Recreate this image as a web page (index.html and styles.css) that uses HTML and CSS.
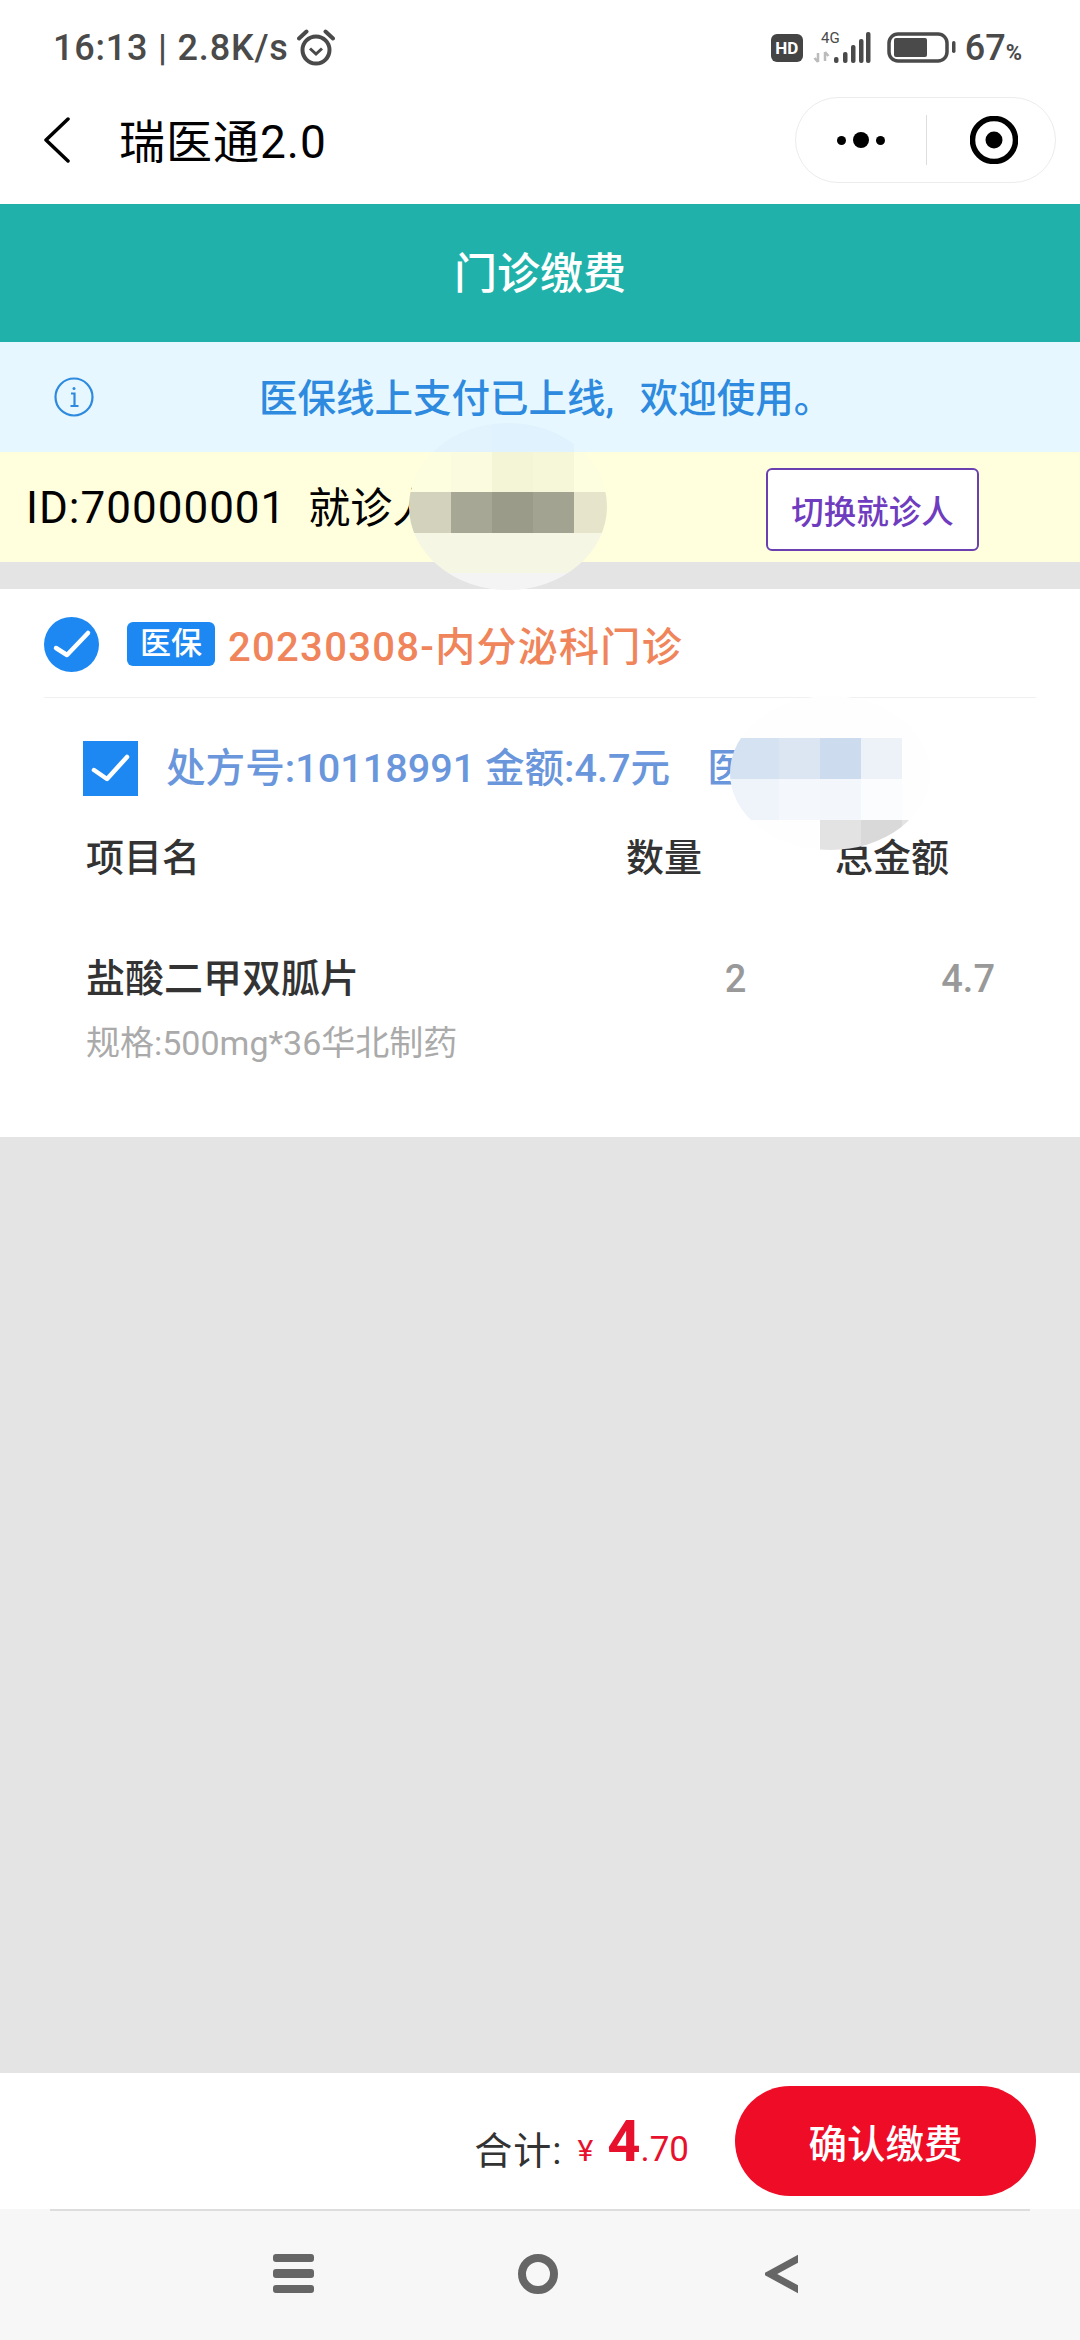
FILE: index.html
```html
<!DOCTYPE html>
<html lang="zh-CN">
<head>
    <meta charset="UTF-8">
    <meta name="viewport" content="width=device-width, initial-scale=1.0">
    <title>门诊缴费</title>
    <link rel="stylesheet" href="styles.css">
</head>
<body>
    <div class="status-bar">
        <div class="status-left">
            <span class="status-time">16:13 | 2.8K/s</span>
            <svg class="alarm" viewBox="0 0 38 38" width="38" height="38" fill="none" stroke="#4a4a4a">
                <circle cx="19" cy="21" r="13.5" stroke-width="4"/>
                <path d="M13 19.5l6 5.5 6-5.5" stroke-width="3"/>
                <path d="M2 9.5L9.5 2.5M36 9.5L28.500 2.500" stroke-width="4" stroke-linecap="round"/>
            </svg>
        </div>
        <div class="status-right">
            <span class="hd">HD</span>
            <svg class="signal" viewBox="0 -8 60 40" width="60" height="40">
                <text x="8" y="11" class="signal-text">4G</text>
                <path d="M5 21v9M1.500 26l3.500 4M12 20v9M15.500 24l-3.500-4" stroke="#bbb" stroke-width="2.500" fill="none"/>
                <rect x="21" y="25" width="4.500" height="6" rx="2" fill="#4a4a4a"/>
                <rect x="30" y="20" width="4.500" height="11" rx="2" fill="#4a4a4a"/>
                <rect x="38" y="13" width="4.500" height="18" rx="2" fill="#4a4a4a"/>
                <rect x="46" y="7" width="4.500" height="24" rx="2" fill="#4a4a4a"/>
                <rect x="53" y="0" width="4.500" height="31" rx="2" fill="#4a4a4a"/>
            </svg>
            <svg class="battery" viewBox="0 0 69 32" width="69" height="32">
                <rect x="2" y="2" width="58" height="27" rx="9" fill="none" stroke="#4a4a4a" stroke-width="3.500"/>
                <rect x="7" y="6" width="33" height="19" rx="2" fill="#4a4a4a"/>
                <rect x="65" y="9" width="3.500" height="12" rx="1.700" fill="#4a4a4a"/>
            </svg>
            <span class="percent">67<small>%</small></span>
        </div>
    </div>

    <div class="nav-bar">
        <svg class="nav-back" viewBox="0 0 26 46" width="26" height="46" fill="none" stroke="#000" stroke-width="3.500" stroke-linecap="round" stroke-linejoin="round">
            <path d="M24 2L2 23l22 21"/>
        </svg>
        <span class="nav-title">瑞医通2.0</span>
        <div class="capsule">
            <div class="capsule-more">
                <i class="dot"></i><i class="dot dot-big"></i><i class="dot"></i>
            </div>
            <div class="capsule-line"></div>
            <svg class="capsule-target" viewBox="0 0 48 48" width="48" height="48">
                <circle cx="24" cy="24" r="21.500" fill="none" stroke="#000" stroke-width="5.500"/>
                <circle cx="24" cy="24" r="8.500" fill="#000"/>
            </svg>
        </div>
    </div>

    <div class="page-title">门诊缴费</div>

    <div class="notice">
        <svg class="notice-icon" viewBox="0 0 40 40" width="40" height="40" fill="none" stroke="#2d8ade">
            <circle cx="20" cy="20" r="18.500" stroke-width="2.200"/>
            <path d="M17 16.500h3.500V29M16.500 29h8" stroke-width="2.200"/>
            <circle cx="20" cy="11.500" r="1.500" fill="#2d8ade" stroke="none"/>
        </svg>
        <span class="notice-text">医保线上支付已上线, 欢迎使用。</span>
    </div>

    <div class="patient">
        <span class="patient-info"><span class="patient-id">ID:70000001</span>就诊人:</span>
        <button class="switch-btn" type="button">切换就诊人</button>
    </div>

    <div class="card">
        <div class="visit">
            <svg class="check" viewBox="0 0 55 55" width="55" height="55">
                <circle cx="27.500" cy="27.500" r="27.500" fill="#1d88f2"/>
                <path d="M12 31l11 7 21-22" fill="none" stroke="#fff" stroke-width="4.500" stroke-linecap="round" stroke-linejoin="round"/>
            </svg>
            <span class="tag">医保</span>
            <span class="visit-title">20230308-内分泌科门诊</span>
        </div>
        <div class="rx">
            <svg class="check-square" viewBox="0 0 55 55" width="55" height="55">
                <rect width="55" height="55" fill="#1d88f2"/>
                <path d="M11 29l13 9 20-22" fill="none" stroke="#fff" stroke-width="4.500" stroke-linecap="round" stroke-linejoin="round"/>
            </svg>
            <span class="rx-text">处方号:10118991 金额:4.7元</span>
            <span class="rx-text rx-type">医保</span>
        </div>
        <div class="table-head">
            <span class="col-name">项目名</span>
            <span class="head-qty">数量</span>
            <span class="head-total">总金额</span>
        </div>
        <div class="item">
            <span class="col-name item-name">盐酸二甲双胍片</span>
            <span class="item-qty">2</span>
            <span class="item-total">4.7</span>
        </div>
        <div class="item-spec">规格:500mg*36华北制药</div>
    </div>

    <div class="spacer"></div>

    <div class="footer">
        <span class="sum-label">合计:</span>
        <span class="sum-price"><span class="yen">¥</span><span class="yuan">4</span><span class="fen">.70</span></span>
        <button class="pay-btn" type="button">确认缴费</button>
    </div>

    <div class="sys-nav">
        <div class="sys-menu"><i></i><i></i><i></i></div>
        <div class="sys-home"></div>
        <svg class="sys-back" viewBox="0 0 33 42" width="33" height="42">
            <path d="M38 3L5 21l33 18" fill="none" stroke="#666" stroke-width="7"/>
        </svg>
    </div>

    <!-- mosaic patches laid over the name fields -->
    <div class="mosaic mosaic-name">
        <div class="c-b1"></div><div class="c-b1"></div><div class="c-b2"></div><div class="c-b2"></div><div class="c-b3"></div>
        <div class="c-y1"></div><div class="c-y2"></div><div class="c-y3"></div><div class="c-y4"></div><div class="c-y1"></div>
        <div class="c-d1"></div><div class="c-d2"></div><div class="c-d3"></div><div class="c-d4"></div><div class="c-d5"></div>
        <div class="c-l1"></div><div class="c-l1"></div><div class="c-l1"></div><div class="c-l1"></div><div class="c-l1"></div>
        <div class="c-g1"></div><div class="c-g1"></div><div class="c-g1"></div><div class="c-g1"></div><div class="c-g1"></div>
    </div>
    <div class="mosaic mosaic-type">
        <div class="c-w"></div><div class="c-w"></div><div class="c-w"></div><div class="c-w"></div><div class="c-w"></div>
        <div class="c-s1"></div><div class="c-s2"></div><div class="c-s3"></div><div class="c-s4"></div><div class="c-w"></div>
        <div class="c-s5"></div><div class="c-s6"></div><div class="c-s7"></div><div class="c-s8"></div><div class="c-w"></div>
        <div class="c-w"></div><div class="c-w"></div><div class="c-g2"></div><div class="c-g3"></div><div class="c-g2"></div>
    </div>
</body>
</html>
```

FILE: styles.css
```css
* {
    box-sizing: border-box;
}
body {
    position: relative;
    display: flex;
    flex-direction: column;
    width: 1080px;
    height: 2340px;
    margin: 0;
    overflow: hidden;
    background: #e4e4e4;
    font-family: Roboto, "Noto Sans CJK SC", sans-serif;
    color: #333;
}

/* status bar */
.status-bar {
    display: flex;
    justify-content: space-between;
    align-items: center;
    height: 85px;
    padding: 10px 58px 0 53px;
    background: #fff;
    color: #4a4a4a;
}
.status-left, .status-right {
    display: flex;
    align-items: center;
}
.status-time {
    font-size: 36px;
    font-weight: 500;
    letter-spacing: 0.8px;
}
.alarm {
    margin-left: 8px;
}
.hd {
    width: 32px;
    height: 28px;
    border-radius: 6px;
    background: #444;
    color: #fff;
    font-size: 17px;
    font-weight: 700;
    line-height: 28px;
    text-align: center;
}
.signal {
    margin: -8px 0 0 10px;
}
.signal-text {
    font-size: 15px;
    fill: #4a4a4a;
}
.battery {
    margin-left: 14px;
}
.percent {
    margin-left: 9px;
    font-size: 36px;
    font-weight: 500;
}
.percent small {
    font-size: 22px;
    font-weight: 700;
}

/* mini program nav */
.nav-bar {
    display: flex;
    align-items: center;
    height: 119px;
    padding: 0 24px 9px 44px;
    background: #fff;
}
.nav-title {
    flex: 1;
    margin: 0 0 4px 49px;
    font-size: 46px;
    letter-spacing: 1px;
    color: #000;
}
.capsule {
    display: flex;
    align-items: center;
    width: 261px;
    height: 86px;
    border: 1.5px solid #ececec;
    border-radius: 43px;
}
.capsule-more {
    display: flex;
    align-items: center;
    gap: 7px;
    margin-left: 41px;
}
.dot {
    width: 9px;
    height: 9px;
    border-radius: 50%;
    background: #000;
}
.dot-big {
    width: 16px;
    height: 16px;
}
.capsule-line {
    width: 1px;
    height: 50px;
    margin-left: 41px;
    background: #ddd;
}
.capsule-target {
    margin-left: 43px;
}

.page-title {
    height: 138px;
    background: #20b2aa;
    color: #fff;
    font-size: 43px;
    font-weight: 500;
    line-height: 140px;
    text-align: center;
}

.notice {
    display: flex;
    align-items: center;
    height: 110px;
    padding-left: 54px;
    background: #e7f7ff;
    color: #2d8ade;
}
.notice-text {
    margin: 0 0 5px 165px;
    font-size: 38.5px;
    font-weight: 500;
    word-spacing: 16px;
}

.patient {
    display: flex;
    justify-content: space-between;
    align-items: center;
    height: 110px;
    padding: 0 101px 0 26px;
    background: #ffffdd;
    color: #000;
    font-size: 42px;
}
.patient-info {
    margin-bottom: 5px;
}
.patient-id {
    margin-right: 22px;
    font-size: 44px;
    letter-spacing: 1px;
}
.switch-btn {
    width: 213px;
    height: 83px;
    margin-top: 5px;
    padding: 0;
    border: 2px solid #6a3fb0;
    border-radius: 6px;
    background: #fff;
    color: #6f3cc0;
    font-family: inherit;
    font-size: 32.500px;
    font-weight: 500;
}

/* order card */
.card {
    height: 548px;
    margin-top: 27px;
    background: #fff;
}
.visit {
    display: flex;
    align-items: center;
    height: 109px;
    margin: 0 44px 0 44px;
    padding-top: 2px;
    border-bottom: 1.5px solid #f0f0f0;
}
.tag {
    width: 88px;
    height: 44px;
    margin-left: 28px;
    border-radius: 6px;
    background: #1d88f2;
    color: #fff;
    font-size: 31px;
    font-weight: 500;
    line-height: 44px;
    text-align: center;
}
.visit-title {
    margin-left: 13px;
    color: #f0845a;
    font-size: 40px;
    font-weight: 500;
    letter-spacing: 1.300px;
}
.rx {
    display: flex;
    align-items: center;
    margin: 38px 0 0 83px;
}
.rx-text {
    margin: 0 0 7px 28px;
    color: #6a96dc;
    font-size: 39.600px;
    font-weight: 500;
    white-space: nowrap;
}
.rx-type {
    margin-left: 37px;
}
.table-head {
    display: flex;
    align-items: center;
    height: 58px;
    margin-top: 25px;
    padding: 0 131px 0 86px;
    font-size: 38px;
    font-weight: 500;
}
.col-name {
    flex: 1;
}
.head-qty {
    margin-right: 133px;
}
.item {
    display: flex;
    align-items: center;
    height: 58px;
    margin-top: 67px;
    padding: 0 85px 0 86px;
    font-size: 38px;
    font-weight: 500;
}
.item-name {
    margin-bottom: 8px;
    font-size: 39px;
}
.item-qty {
    color: #999;
    margin-right: 195px;
}
.item-total {
    color: #999;
}
.item-spec {
    margin: 8px 0 0 86px;
    color: #aaa;
    font-size: 34px;
}

.spacer {
    flex: 1;
}

.footer {
    display: flex;
    align-items: center;
    justify-content: flex-end;
    height: 136px;
    padding: 0 44px 0 0;
    background: #fff;
}
.sum-label {
    margin-top: 12px;
    font-size: 38px;
    letter-spacing: 1px;
}
.sum-price {
    margin: 0 46px 0 15px;
    color: #e8112d;
}
.yen {
    font-size: 30px;
    margin-right: 14px;
}
.yuan {
    font-size: 58px;
    font-weight: 700;
}
.fen {
    font-size: 35px;
}
.pay-btn {
    width: 301px;
    height: 110px;
    padding: 0;
    border: none;
    border-radius: 55px;
    background: #ee0c27;
    color: #fff;
    font-family: inherit;
    font-size: 38.500px;
    font-weight: 500;
}

/* android nav */
.sys-nav {
    position: relative;
    display: flex;
    align-items: center;
    height: 131px;
    padding: 0 0 2px 273px;
    background: #f7f7f7;
}
.sys-nav::before {
    content: "";
    position: absolute;
    top: 0;
    left: 50px;
    width: 980px;
    height: 2px;
    background: #ddd;
}
.sys-menu {
    display: flex;
    flex-direction: column;
    gap: 7px;
    width: 41px;
}
.sys-menu i {
    height: 8.500px;
    border-radius: 3px;
    background: #666;
}
.sys-home {
    width: 40px;
    height: 40px;
    margin-left: 204px;
    border: 8px solid #666;
    border-radius: 50%;
}
.sys-back {
    margin-left: 207px;
}

/* mosaics */
.mosaic {
    position: absolute;
    display: grid;
    overflow: hidden;
    border-radius: 50%;
}
.mosaic-name {
    left: 409px;
    top: 423px;
    width: 198px;
    height: 167px;
    grid-template-columns: 42px 41px 41px 41px 33px;
    grid-template-rows: 29px 40px 41px 40px 17px;
}
.mosaic-type {
    left: 730px;
    top: 696px;
    width: 200px;
    height: 154px;
    grid-template-columns: 49px 41px 41px 41px 28px;
    grid-template-rows: 42px 41px 41px 30px;
}
.c-b1 { background: #e3f3fe; }
.c-b2 { background: #dff2fd; }
.c-b3 { background: #e8f7fe; }
.c-y1 { background: #fdfde0; }
.c-y2 { background: #fbfbdf; }
.c-y3 { background: #f4f4d6; }
.c-y4 { background: #f6f6d9; }
.c-d1 { background: #d2d2bd; }
.c-d2 { background: #a7a795; }
.c-d3 { background: #9b9b8a; }
.c-d4 { background: #a3a391; }
.c-d5 { background: #e6e5cc; }
.c-l1 { background: #f6f6e4; }
.c-g1 { background: #f4f4f4; }
.c-w { background: #fefefe; }
.c-s1 { background: #d5e2f2; }
.c-s2 { background: #dce6f2; }
.c-s3 { background: #ccdcee; }
.c-s4 { background: #edf2f8; }
.c-s5 { background: #eff3fa; }
.c-s6 { background: #f4f7fc; }
.c-s7 { background: #f3f6fb; }
.c-s8 { background: #fbfcfe; }
.c-g2 { background: #e3e3e3; }
.c-g3 { background: #d9d9d9; }
```
